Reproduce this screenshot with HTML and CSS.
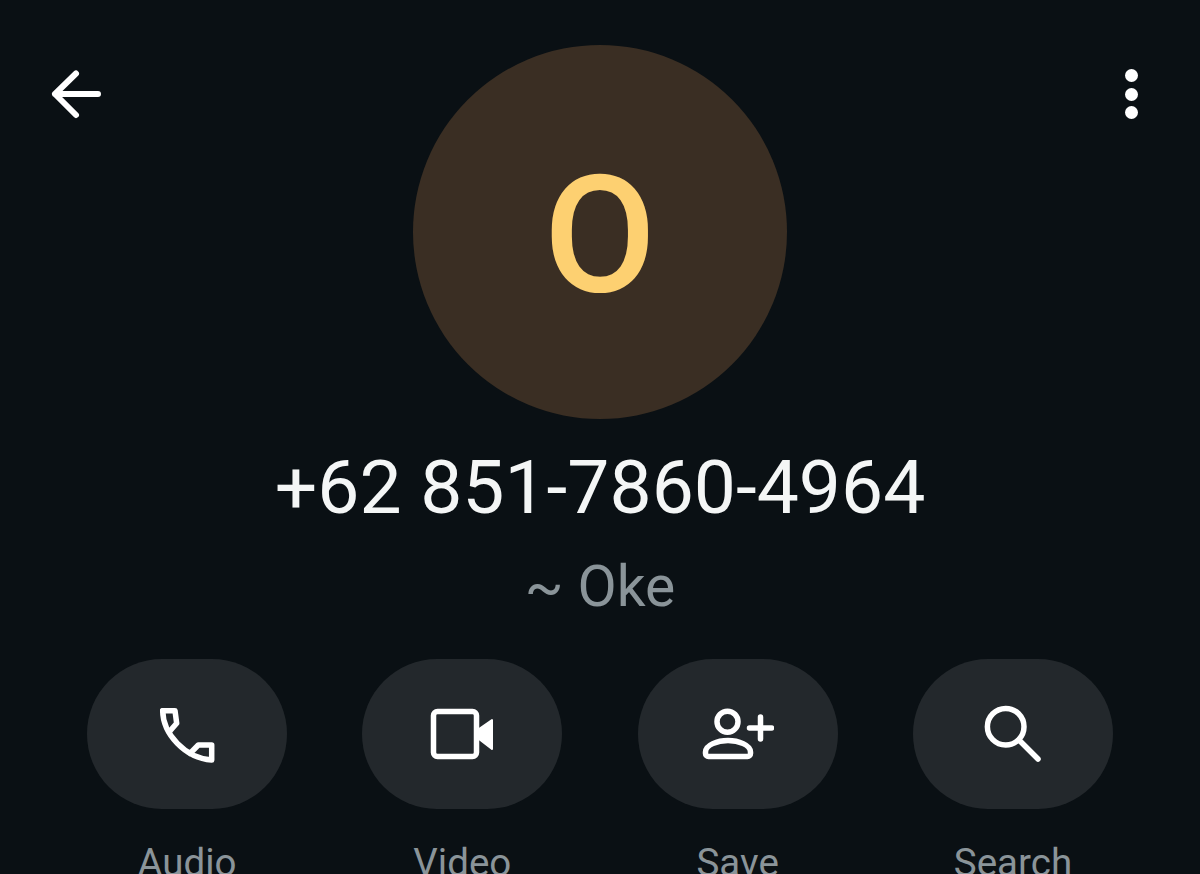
FILE: index.html
```html
<!DOCTYPE html>
<html lang="en">
<head>
  <meta charset="UTF-8">
  <title>Contact info</title>
  <link rel="stylesheet" href="styles.css">
</head>
<body>

<div class="screen">
  <div class="header">
    <button class="back" aria-label="Back">
      <svg width="60" height="60" viewBox="0 0 60 60" fill="none" stroke="#fff" stroke-width="6" stroke-linecap="round" stroke-linejoin="round">
        <path d="M9 30H52M30 9.500L9 30L30 51"/>
      </svg>
    </button>
    <div class="avatar">O</div>
    <button class="more" aria-label="More">
      <span class="dot"></span>
      <span class="dot"></span>
      <span class="dot"></span>
    </button>
  </div>

  <div class="phone">+62 851-7860-4964</div>
  <div class="pushname">~ Oke</div>

  <div class="actions">
    <div class="action">
      <div class="pill">
        <svg width="70" height="70" viewBox="0 0 70 70" fill="none" stroke="#fff" stroke-width="5.500" stroke-linejoin="round" stroke-linecap="round">
          <path d="M10.700 11.700H23L24.700 24.300L17.300 32.700"/>
          <path d="M10.700 11.700C11 35 33 59 59.700 61V46H46.300L38 54.500"/>
        </svg>
      </div>
      <div class="label">Audio</div>
    </div>
    <div class="action">
      <div class="pill">
        <svg width="70" height="70" viewBox="0 0 70 70" fill="none" stroke="#fff" stroke-width="5.500" stroke-linejoin="round">
          <rect x="6.500" y="12.500" width="43" height="45" rx="4"/>
          <path d="M52 30L65 21V50L52 40Z" fill="#fff" stroke-width="2"/>
        </svg>
      </div>
      <div class="label">Video</div>
    </div>
    <div class="action">
      <div class="pill">
        <svg width="72" height="70" viewBox="0 0 72 70" fill="none" stroke="#fff" stroke-width="5.500" stroke-linecap="round">
          <circle cx="25.500" cy="22.700" r="10.500"/>
          <path d="M6.500 57.500H45.500a3 3 0 0 0 3-3V53C48.500 46 36.500 41.500 26 41.500S3.500 46 3.500 53v1.500a3 3 0 0 0 3 3Z"/>
          <path d="M47.500 29H69.500M58.500 18V40"/>
        </svg>
      </div>
      <div class="label">Save</div>
    </div>
    <div class="action">
      <div class="pill">
        <svg width="70" height="70" viewBox="0 0 70 70" fill="none" stroke="#fff" stroke-width="5.500" stroke-linecap="round">
          <circle cx="27.700" cy="27.700" r="18.300"/>
          <path d="M41 41L60 60"/>
        </svg>
      </div>
      <div class="label">Search</div>
    </div>
  </div>
</div>

</body>
</html>
```

FILE: styles.css
```css
* {
  box-sizing: border-box;
}

html, body {
  margin: 0;
  height: 100%;
}

body {
  background-color: #0a1014;
  font-family: Roboto, 'Noto Sans', sans-serif;
  overflow: hidden;
}

.screen {
  height: 874px;
  overflow: hidden;
  display: flex;
  flex-direction: column;
  align-items: center;
}

.header {
  width: 100%;
  padding-top: 45px;
  display: grid;
  grid-template-columns: 1fr 374px 1fr;
  align-items: start;
}

button {
  background: none;
  border: 0;
  padding: 0;
}

.back {
  justify-self: start;
  margin: 19px 0 0 46px;
  height: 60px;
}

.more {
  justify-self: end;
  margin: 24px 62px 0 0;
  display: flex;
  flex-direction: column;
  gap: 5.500px;
}

.dot {
  width: 13px;
  height: 13px;
  border-radius: 50%;
  background-color: #fff;
}

.avatar {
  width: 374px;
  height: 374px;
  border-radius: 50%;
  background-color: #3a2e23;
  color: #fdd071;
  font-size: 163px;
  font-weight: 500;
  line-height: 382px;
  text-align: center;
}

.phone {
  margin-top: 28px;
  color: #f4f6f6;
  font-size: 75px;
  line-height: 81px;
}

.pushname {
  margin-top: 29px;
  color: #8a9499;
  font-size: 57px;
  line-height: 59px;
}

.actions {
  width: 100%;
  margin-top: 43px;
  padding: 0 87px;
  display: flex;
  justify-content: space-between;
}

.action {
  width: 200px;
  display: flex;
  flex-direction: column;
  align-items: center;
}

.pill {
  width: 200px;
  height: 150px;
  border-radius: 75px;
  background-color: #23282c;
  display: flex;
  align-items: center;
  justify-content: center;
}

.label {
  margin-top: 33px;
  color: #8a9499;
  font-size: 38.500px;
  line-height: 42px;
}
```
